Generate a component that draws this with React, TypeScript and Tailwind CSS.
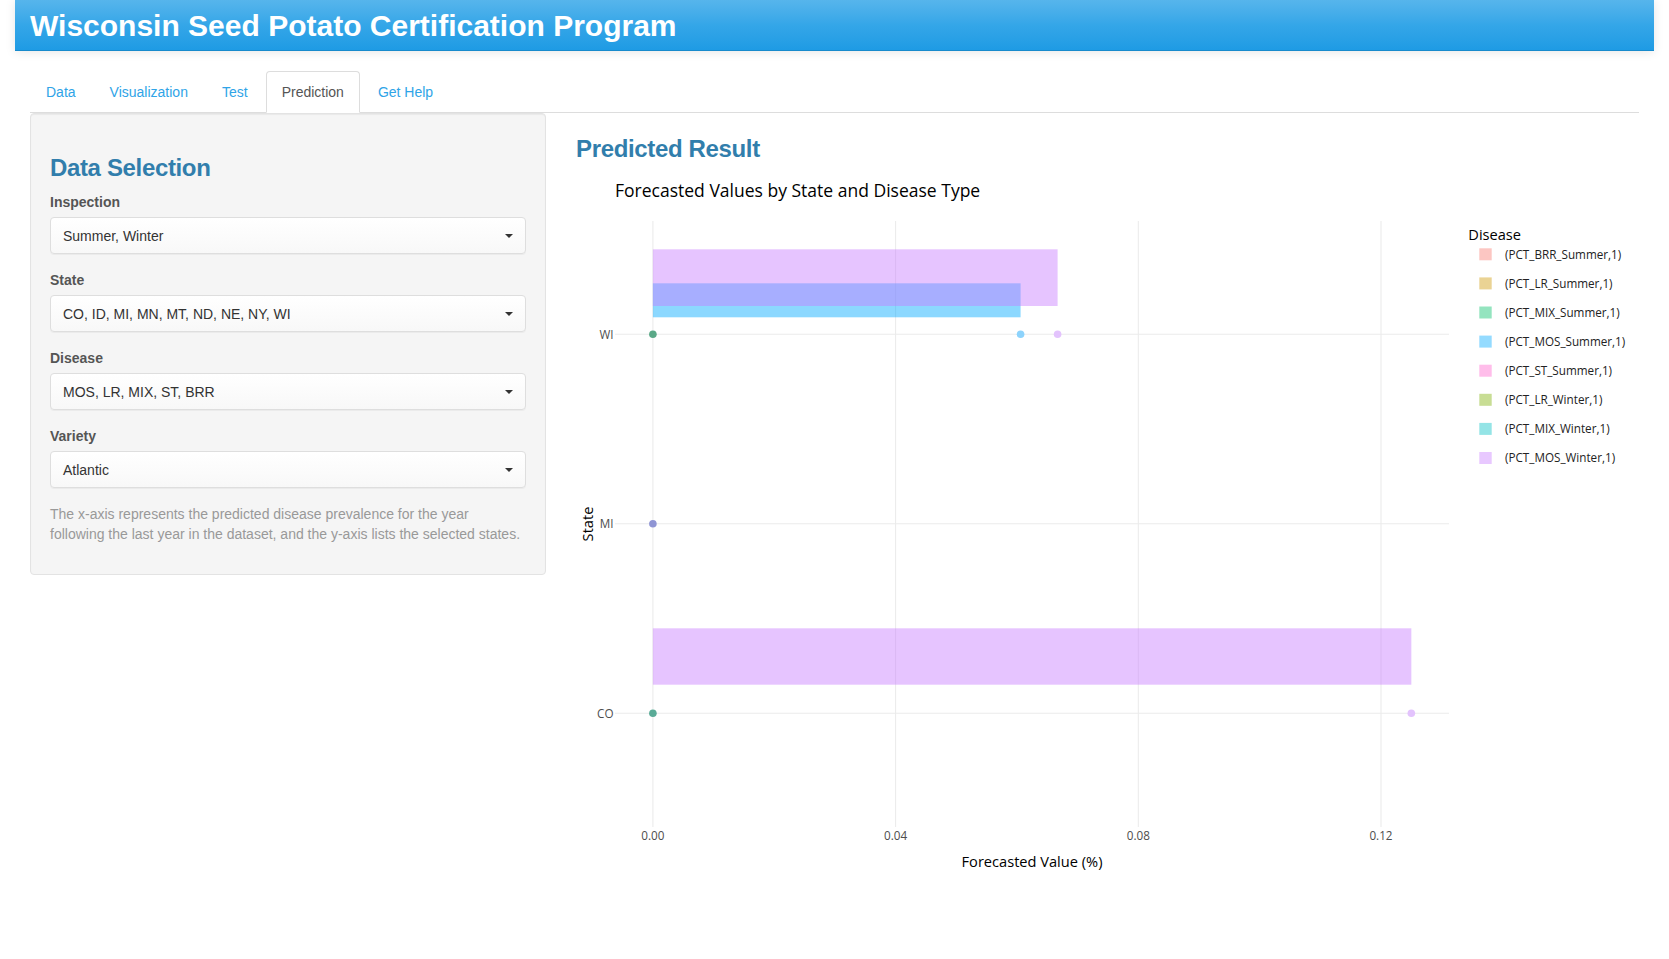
const tabs = ["Data", "Visualization", "Test", "Prediction", "Get Help"];

const inputs = [
  { label: "Inspection", value: "Summer, Winter" },
  { label: "State", value: "CO, ID, MI, MN, MT, ND, NE, NY, WI" },
  { label: "Disease", value: "MOS, LR, MIX, ST, BRR" },
  { label: "Variety", value: "Atlantic" },
];

// plot coordinates (svg space, origin at the top-left of the chart block)
const X0 = 76.9;
const PX = 6067.5;
const xOf = (v: number) => X0 + v * PX;
const PLOT = { left: 39, right: 873, top: 51, bottom: 657 };

const states = [
  { name: "WI", y: 164.3 },
  { name: "MI", y: 353.7 },
  { name: "CO", y: 543.3 },
];

const ticks = [
  { v: 0, label: "0.00" },
  { v: 0.04, label: "0.04" },
  { v: 0.08, label: "0.08" },
  { v: 0.12, label: "0.12" },
];

const legend = [
  { name: "(PCT_BRR_Summer,1)", color: "#F8766D" },
  { name: "(PCT_LR_Summer,1)", color: "#CD9600" },
  { name: "(PCT_MIX_Summer,1)", color: "#00BE67" },
  { name: "(PCT_MOS_Summer,1)", color: "#00A9FF" },
  { name: "(PCT_ST_Summer,1)", color: "#FF61CC" },
  { name: "(PCT_LR_Winter,1)", color: "#7CAE00" },
  { name: "(PCT_MIX_Winter,1)", color: "#00BFC4" },
  { name: "(PCT_MOS_Winter,1)", color: "#C77CFF" },
];

const bars = [
  { x: 0.0606, y0: 113.3, y1: 147.3, color: "#00A9FF" },
  { x: 0.0667, y0: 79.3, y1: 136, color: "#C77CFF" },
  { x: 0.125, y0: 458.3, y1: 514.7, color: "#C77CFF" },
];

const dots = [
  { x: 0, y: 164.3, color: "#5aa887" },
  { x: 0.0606, y: 164.3, color: "#8dd3fc" },
  { x: 0.0667, y: 164.3, color: "#e3c3fd" },
  { x: 0, y: 353.7, color: "#8f95d4" },
  { x: 0, y: 543.3, color: "#5aab97" },
  { x: 0.125, y: 543.3, color: "#e3c3fd" },
];

function Chart() {
  return (
    <svg width={1063} height={710} className="block font-['Open_Sans',Verdana,Arial,sans-serif]">
      <text x={39} y={27.3} fontSize={17.53} fill="#000">
        Forecasted Values by State and Disease Type
      </text>

      {ticks.map((t) => (
        <line key={t.label} x1={xOf(t.v)} x2={xOf(t.v)} y1={PLOT.top} y2={PLOT.bottom} stroke="#ebebeb" strokeWidth={1.06} />
      ))}
      {states.map((s) => (
        <line key={s.name} x1={PLOT.left} x2={PLOT.right} y1={s.y} y2={s.y} stroke="#ebebeb" strokeWidth={1.06} />
      ))}

      {bars.map((b, i) => (
        <rect key={i} x={X0} y={b.y0} width={xOf(b.x) - X0} height={b.y1 - b.y0} fill={b.color} fillOpacity={0.45} />
      ))}

      {dots.map((d, i) => (
        <circle key={i} cx={xOf(d.x)} cy={d.y} r={3.8} fill={d.color} />
      ))}

      {states.map((s) => (
        <text key={s.name} x={37.5} y={s.y + 4.2} fontSize={11.69} fill="#4d4d4d" textAnchor="end">
          {s.name}
        </text>
      ))}
      {ticks.map((t) => (
        <text key={t.label} x={xOf(t.v)} y={670.2} fontSize={11.69} fill="#4d4d4d" textAnchor="middle">
          {t.label}
        </text>
      ))}

      <text x={456} y={696.7} fontSize={14.61} fill="#000" textAnchor="middle">
        Forecasted Value (%)
      </text>
      <text transform="translate(16.5,354) rotate(-90)" fontSize={14.61} fill="#000" textAnchor="middle">
        State
      </text>

      <text x={892.3} y={70.2} fontSize={14.61} fill="#000">
        Disease
      </text>
      {legend.map((l, i) => {
        const cy = 84.3 + i * 29.1;
        return (
          <g key={l.name}>
            <rect x={903.3} y={cy - 6} width={12.4} height={12} fill={l.color} fillOpacity={0.42} />
            <text x={929} y={cy + 4.2} fontSize={11.69} fill="#222">
              {l.name}
            </text>
          </g>
        );
      })}
    </svg>
  );
}

function SelectBox({ value }: { value: string }) {
  return (
    <div className="flex h-[37px] items-center justify-between rounded-[4px] border border-[#dedede] bg-gradient-to-b from-white to-[#f8f8f8] pl-[12px] pr-[12px] text-[14px] text-[#333] shadow-[0_1px_0_rgba(0,0,0,0.04)]">
      <span>{value}</span>
      <span className="h-0 w-0 border-l-[4px] border-r-[4px] border-t-[4px] border-l-transparent border-r-transparent border-t-[#333]" />
    </div>
  );
}

export default function App() {
  return (
    <div className="min-h-screen bg-white font-['Liberation_Sans',Arial,sans-serif] text-[14px] leading-[20px] text-[#555]">
      <div className="px-[15px]">
        <div className="flex h-[51px] items-center border-b border-[#178acc] bg-gradient-to-b from-[#56b5ec] via-[#34a6e8] to-[#1e9be4] pl-[15px] pt-[2px] shadow-[0_1px_10px_rgba(0,0,0,0.1)]">
          <h1 className="text-[30px] font-bold leading-[34px] text-white">Wisconsin Seed Potato Certification Program</h1>
        </div>
      </div>

      <div className="mt-[20px] px-[30px]">
        <ul className="flex border-b border-[#ddd]">
          {tabs.map((t) => (
            <li key={t} className="-mb-px mr-[2px]">
              {t === "Prediction" ? (
                <span className="block rounded-t-[4px] border border-[#ddd] border-b-transparent bg-white px-[15px] py-[10px] text-[#555]">
                  {t}
                </span>
              ) : (
                <span className="block border border-transparent px-[15px] py-[10px] text-[#2fa4e7]">{t}</span>
              )}
            </li>
          ))}
        </ul>

        <div className="flex gap-[30px]">
          <div className="w-[516px] shrink-0">
            <div className="rounded-[4px] border border-[#e3e3e3] bg-[#f5f5f5] px-[19px] pb-[30px] pt-[19px] shadow-[inset_0_1px_1px_rgba(0,0,0,0.05)]">
              <h3 className="mt-[22px] text-[24px] font-bold leading-[26.4px] tracking-[-0.35px] text-[#317eac]">Data Selection</h3>
              <div className="mt-[11px] flex flex-col gap-[16px]">
                {inputs.map((inp) => (
                  <div key={inp.label}>
                    <label className="mb-[5px] block font-bold text-[#555]">{inp.label}</label>
                    <SelectBox value={inp.value} />
                  </div>
                ))}
              </div>
              <p className="mt-[16px] text-[#999]">
                The x-axis represents the predicted disease prevalence for the year following the last year in the dataset, and the y-axis lists the selected states.
              </p>
            </div>
          </div>

          <div className="min-w-0 flex-1">
            <h3 className="mt-[23px] text-[24px] font-bold leading-[26.4px] tracking-[-0.35px] text-[#317eac]">Predicted Result</h3>
            <div className="mt-[8px]">
              <Chart />
            </div>
          </div>
        </div>
      </div>
    </div>
  );
}
